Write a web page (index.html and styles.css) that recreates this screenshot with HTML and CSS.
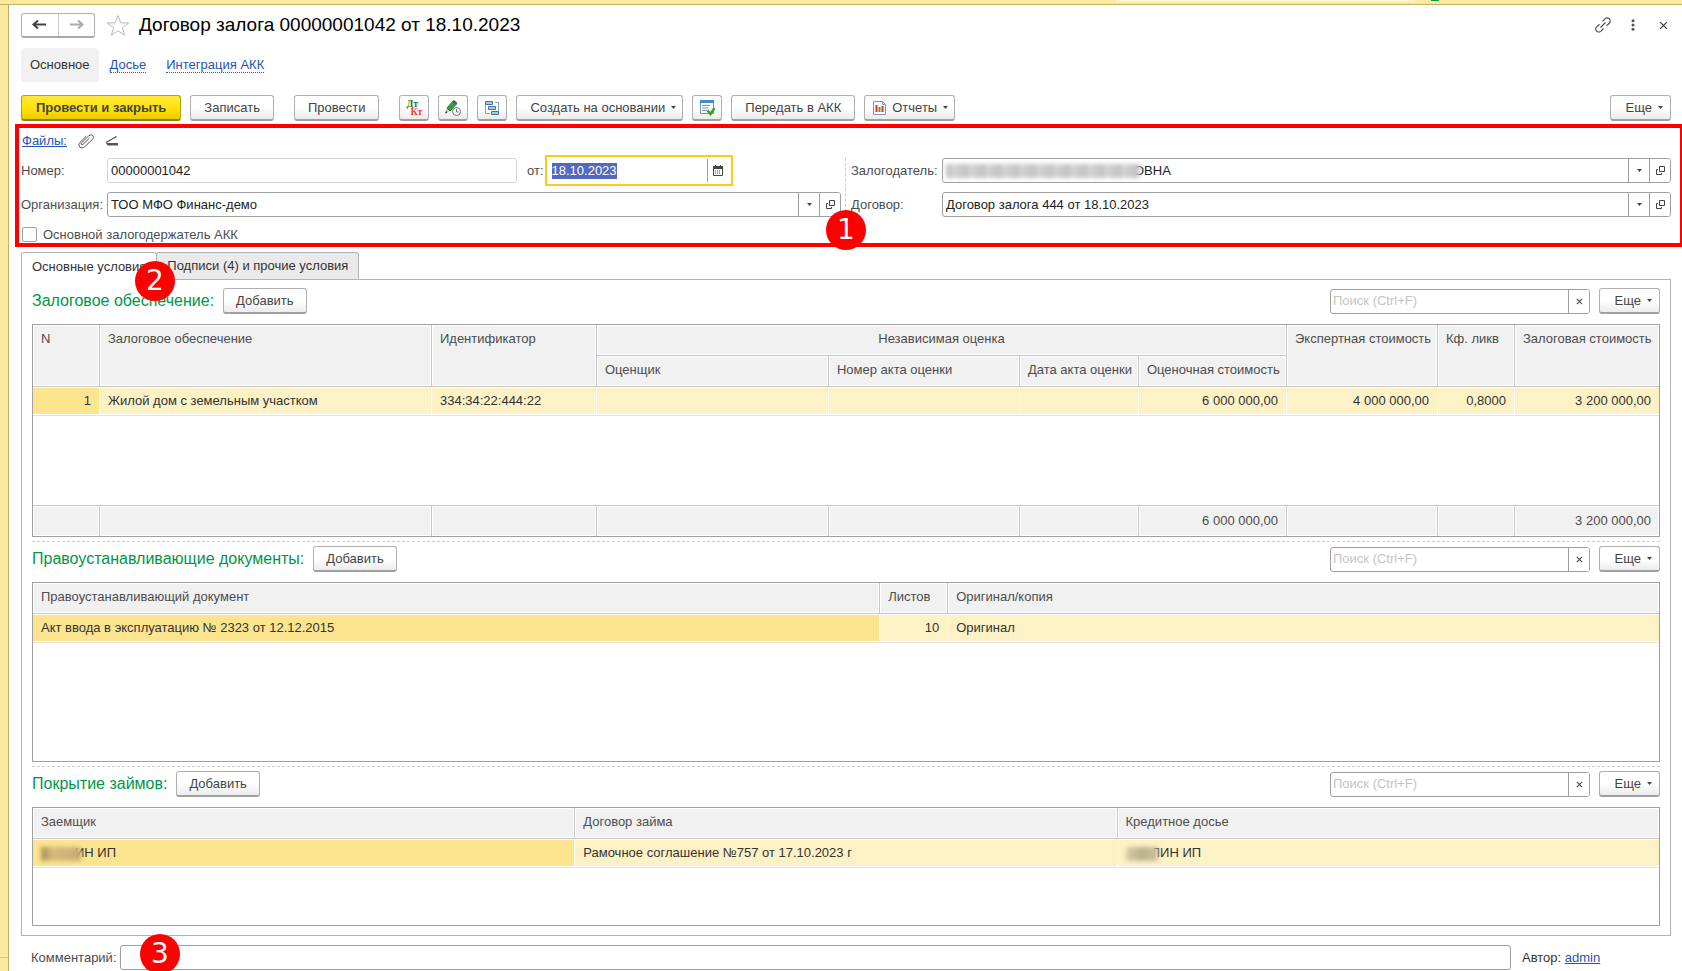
FILE: index.html
```html
<!DOCTYPE html>
<html lang="ru">
<head>
<meta charset="utf-8">
<title>Договор залога 00000001042 от 18.10.2023</title>
<link rel="stylesheet" href="styles.css">
</head>
<body>
<svg class="sprite" aria-hidden="true">
  <symbol id="open" viewBox="0 0 9 9"><path d="M3.500 .5h5v5h-5zM2 3.500H.5v5h5V7" fill="none" stroke="#444"/></symbol>
  <symbol id="caret" viewBox="0 0 5 3"><path d="M0 0h5L2.500 3z" fill="#444"/></symbol>
  <symbol id="cross" viewBox="0 0 8 8"><path d="M1 1l6 6M7 1L1 7" stroke="#444" stroke-width="1.200" fill="none"/></symbol>
</svg>
<div class="strip"><div class="strip-tab"></div><div class="strip-dot"></div></div>
<div class="frame">
<div class="rail"></div>
<main class="form">
  <header class="head">
    <div class="history">
      <button aria-label="Назад"><svg width="15" height="11" viewBox="0 0 15 11"><path d="M1.500 5.500H14M6 1.500l-4.500 4L6 9.500" fill="none" stroke="#444" stroke-width="2"/></svg></button>
      <button aria-label="Вперед"><svg width="15" height="11" viewBox="0 0 15 11"><path d="M1 5.500h12.500M9 1.500l4.500 4-4.500 4" fill="none" stroke="#aaa" stroke-width="2"/></svg></button>
    </div>
    <button class="bare star" aria-label="Избранное"><svg width="24" height="23" viewBox="0 0 24 23"><path d="M12 1.500l2.700 7.300 8 .2-6.300 4.700 2.300 7.500L12 16.800l-6.700 4.400 2.300-7.500L1.300 9l8-.2z" fill="#fff" stroke="#b4bac0"/></svg></button>
    <h1>Договор залога 00000001042 от 18.10.2023</h1>
    <div class="window-tools">
      <button class="bare" aria-label="Ссылка"><svg width="16" height="16" viewBox="0 0 16 16" fill="none" stroke="#555" stroke-width="1.200"><path d="M7.500 4.500l2.500-2.700a3 3 0 0 1 4.300 0 3 3 0 0 1 0 4.400L11.500 8.800M8.500 11.500L6 14.200a3 3 0 0 1-4.300 0 3 3 0 0 1 0-4.400L4.500 7.200M5.500 10.500l5-5"/></svg></button>
      <button class="bare" aria-label="Меню"><svg width="4" height="12" viewBox="0 0 4 12" fill="#555"><circle cx="2" cy="1.700" r="1.500"/><circle cx="2" cy="6" r="1.500"/><circle cx="2" cy="10.300" r="1.500"/></svg></button>
      <button class="bare close" aria-label="Закрыть"><svg width="9" height="9" viewBox="0 0 8 8"><use href="#cross"/></svg></button>
    </div>
  </header>

  <nav class="sections">
    <span class="current">Основное</span>
    <a href="#">Досье</a>
    <a href="#">Интеграция АКК</a>
  </nav>

  <div class="toolbar">
    <button class="btn primary">Провести и закрыть</button>
    <button class="btn">Записать</button>
    <button class="btn apart">Провести</button>
    <button class="btn icon apart" aria-label="Дт Кт"><span class="dtkt"><b class="dt">Дт</b><b class="kt">Кт</b></span></button>
    <button class="btn icon" aria-label="История"><svg width="18" height="18" viewBox="0 0 18 18"><path d="M1 14l2-5 3 3z" fill="#ddb68b"/><path d="M3 9l6-7 3.500 3L6 12z" fill="#3c9b42" stroke="#287a30"/><path d="M8.500 2.500L10 1l3.500 3L12 5.500z" fill="#555"/><path d="M1 14.500l1-2.500 1.500 1.500z" fill="#333"/><circle cx="12.500" cy="12.500" r="4" fill="#fff" stroke="#60788e"/><path d="M12.500 10v3h2" fill="none" stroke="#60788e"/></svg></button>
    <button class="btn icon" aria-label="Структура"><svg width="16" height="16" viewBox="0 0 16 16" fill="#a9cbe2" stroke="#42759a"><path d="M1.500 4v9.500H6M11 2.500h3.500V11" fill="none" stroke="#82a6bf"/><path d="M1.500 1.500h7v3h-7zM4.500 6.500h7v3h-7zM7.500 11.500h7v3h-7z"/></svg></button>
    <button class="btn menu wide">Создать на основании<svg width="5" height="3"><use href="#caret"/></svg></button>
    <button class="btn icon" aria-label="Задача"><svg width="17" height="17" viewBox="0 0 17 17"><path d="M1.500 1.500h13v13h-13z" fill="#fff" stroke="#6f95ba"/><path d="M1 1h14v3H1z" fill="#3f8bd0"/><path d="M3 6.500h8M3 9h6M3 11.500h5" stroke="#7996b1"/><path d="M8.500 11.500l3 3.500 4-6" fill="none" stroke="#32a52c" stroke-width="2.500"/></svg></button>
    <button class="btn">Передать в АКК</button>
    <button class="btn menu report"><svg width="13" height="14" viewBox="0 0 13 14"><path d="M.5.5h9l3 3v10H.5z" fill="#fff" stroke="#8298aa"/><path d="M9.500.5v3h3" fill="none" stroke="#8298aa"/><path d="M3.500 4v7" stroke="#e03028" stroke-width="2"/><path d="M6.500 6v5" stroke="#3d9e42" stroke-width="2"/><path d="M9.500 5v6" stroke="#e03028" stroke-width="2"/></svg>Отчеты<svg width="5" height="3"><use href="#caret"/></svg></button>
    <button class="btn menu more">Еще<svg width="5" height="3"><use href="#caret"/></svg></button>
  </div>

  <section class="details">
    <div class="files">
      <a href="#">Файлы:</a>
      <button class="bare" aria-label="Прикрепить"><svg width="18" height="16" viewBox="0 0 18 16"><path d="M12.500 5L6 11.300c-1.200 1-2.600-.3-1.500-1.500l7.300-7c2.800-2.500 6.300.8 3.700 3.500l-7.800 7.500c-3.400 3-8-1-4.700-4.500L9.500 3" fill="none" stroke="#555"/></svg></button>
      <button class="bare" aria-label="Сканировать"><svg width="13" height="12" viewBox="0 0 13 12"><path d="M11.500 1.500L1 7.500" stroke="#555" stroke-width="1.300"/><path d="M1 8h12v2.500H2.500z" fill="#555"/></svg></button>
    </div>
    <div class="columns">
      <div class="fields left">
        <label for="num">Номер:</label>
        <div class="row">
          <div class="field pale"><input id="num" value="00000001042"></div>
          <label for="date">от:</label>
          <div class="field date"><input id="date" value="18.10.2023"><button aria-label="Календарь"><svg width="10" height="11" viewBox="0 0 10 11"><path d="M.5 1.500h9v9h-9z" fill="#fff" stroke="#444"/><path d="M0 1h10v3H0zM2 0h1v2H2zM7 0h1v2H7z" fill="#444"/><path d="M2 6h6M2 8h6" stroke="#444" stroke-dasharray="1 1"/></svg></button></div>
        </div>
        <label for="org">Организация:</label>
        <div class="field"><input id="org" value="ТОО МФО Финанс-демо"><button aria-label="Выбрать"><svg width="5" height="3"><use href="#caret"/></svg></button><button aria-label="Открыть"><svg width="9" height="9"><use href="#open"/></svg></button></div>
      </div>
      <div class="fields right">
        <label for="owner">Залогодатель:</label>
        <div class="field"><span class="mask mask-owner"></span><input id="owner" class="after-mask" value="ОВНА"><button aria-label="Выбрать"><svg width="5" height="3"><use href="#caret"/></svg></button><button aria-label="Открыть"><svg width="9" height="9"><use href="#open"/></svg></button></div>
        <label for="deal">Договор:</label>
        <div class="field"><input id="deal" value="Договор залога 444 от 18.10.2023"><button aria-label="Выбрать"><svg width="5" height="3"><use href="#caret"/></svg></button><button aria-label="Открыть"><svg width="9" height="9"><use href="#open"/></svg></button></div>
      </div>
    </div>
    <label class="check"><input type="checkbox">Основной залогодержатель АКК</label>
    <span class="badge badge-1">1</span>
  </section>

  <div class="tabs" role="tablist">
    <button class="tab active" role="tab">Основные условия</button>
    <button class="tab" role="tab">Подписи (4) и прочие условия</button>
    <span class="badge badge-2">2</span>
  </div>

  <div class="panel">
    <section class="block">
      <div class="block-head">
        <h2>Залоговое обеспечение:</h2><button class="btn">Добавить</button>
        <div class="field search"><input aria-label="Поиск" placeholder="Поиск (Ctrl+F)"><button aria-label="Очистить"><svg width="7" height="7"><use href="#cross"/></svg></button></div>
        <button class="btn menu more">Еще<svg width="5" height="3"><use href="#caret"/></svg></button>
      </div>
      <table class="collateral">
        <colgroup><col class="c-n"><col class="c-name"><col class="c-id"><col class="c-by"><col class="c-act"><col class="c-date"><col class="c-sum"><col class="c-exp"><col class="c-k"><col class="c-total"></colgroup>
        <thead>
          <tr><th rowspan="2">N</th><th rowspan="2">Залоговое обеспечение</th><th rowspan="2">Идентификатор</th><th colspan="4" class="center">Независимая оценка</th><th rowspan="2">Экспертная стоимость</th><th rowspan="2">Кф. ликв</th><th rowspan="2">Залоговая стоимость</th></tr>
          <tr><th>Оценщик</th><th>Номер акта оценки</th><th>Дата акта оценки</th><th>Оценочная стоимость</th></tr>
        </thead>
        <tbody>
          <tr><td class="num selected">1</td><td>Жилой дом с земельным участком</td><td>334:34:22:444:22</td><td></td><td></td><td></td><td class="num">6 000 000,00</td><td class="num">4 000 000,00</td><td class="num">0,8000</td><td class="num">3 200 000,00</td></tr>
          <tr class="rest"><td colspan="10"></td></tr>
        </tbody>
        <tfoot>
          <tr><td></td><td></td><td></td><td></td><td></td><td></td><td class="num">6 000 000,00</td><td></td><td></td><td class="num">3 200 000,00</td></tr>
        </tfoot>
      </table>
    </section>

    <section class="block">
      <div class="block-head">
        <h2>Правоустанавливающие документы:</h2><button class="btn">Добавить</button>
        <div class="field search"><input aria-label="Поиск" placeholder="Поиск (Ctrl+F)"><button aria-label="Очистить"><svg width="7" height="7"><use href="#cross"/></svg></button></div>
        <button class="btn menu more">Еще<svg width="5" height="3"><use href="#caret"/></svg></button>
      </div>
      <table class="papers">
        <colgroup><col class="c-doc"><col class="c-pages"><col></colgroup>
        <thead><tr><th>Правоустанавливающий документ</th><th>Листов</th><th>Оригинал/копия</th></tr></thead>
        <tbody>
          <tr><td class="selected">Акт ввода в эксплуатацию № 2323 от 12.12.2015</td><td class="num">10</td><td>Оригинал</td></tr>
          <tr class="rest"><td colspan="3"></td></tr>
        </tbody>
      </table>
    </section>

    <section class="block">
      <div class="block-head">
        <h2>Покрытие займов:</h2><button class="btn">Добавить</button>
        <div class="field search"><input aria-label="Поиск" placeholder="Поиск (Ctrl+F)"><button aria-label="Очистить"><svg width="7" height="7"><use href="#cross"/></svg></button></div>
        <button class="btn menu more">Еще<svg width="5" height="3"><use href="#caret"/></svg></button>
      </div>
      <table class="loans">
        <colgroup><col class="c-third"><col class="c-third"><col></colgroup>
        <thead><tr><th>Заемщик</th><th>Договор займа</th><th>Кредитное досье</th></tr></thead>
        <tbody>
          <tr><td class="selected"><span class="mask mask-name"></span>ИН ИП</td><td>Рамочное соглашение №757 от 17.10.2023 г</td><td><span class="mask mask-file"></span>ЛИН ИП</td></tr>
          <tr class="rest"><td colspan="3"></td></tr>
        </tbody>
      </table>
    </section>
  </div>

  <footer class="bottom">
    <label for="note">Комментарий:</label>
    <div class="field"><input id="note"></div>
    <span class="author">Автор: <a href="#">admin</a></span>
    <span class="badge badge-3">3</span>
  </footer>
</main>
</div>
</body>
</html>
```
FILE: styles.css
```css
* { box-sizing: border-box; }
html { overflow: hidden; }
body {
  margin: 0;
  min-height: 100vh;
  display: flex;
  flex-direction: column;
  font: 13px/16px "Liberation Sans", Arial, sans-serif;
  color: #4d4d4d;
  background: #fff;
}
button, input { font: inherit; color: inherit; margin: 0; }
button { padding: 0; cursor: pointer; }
svg { display: block; flex: none; }
a { color: #1f55b8; }
.sprite { position: absolute; width: 0; height: 0; }

.strip { height: 5px; background: #fbea9e; border-bottom: 1px solid #c0b068; display: flex; justify-content: flex-end; }
.strip-tab { width: 299px; height: 2px; background: #fdf6cf; margin-right: 16px; }
.strip-dot { width: 8px; height: 1px; background: #0a9a4a; margin-right: 243px; }
.frame { flex: 1; display: flex; }
.rail { width: 9px; display: flex; align-items: flex-end; background: #fbea9e; border-right: 1px solid #c0b068; }
.rail::after { content: ""; flex: 1; height: 13px; border-top: 1px solid #d6c67c; }
.form { flex: 1; min-width: 0; padding: 8px 11px 0 12px; overflow: clip; }

.head { display: flex; align-items: center; height: 24px; }
.history { display: flex; width: 74px; height: 25px; border: 1px solid #b0b0b0; border-bottom: 2px solid #a8a8a8; border-radius: 3px; }
.history button { flex: 1; display: flex; align-items: center; justify-content: center; border: 0; background: none; }
.history button + button { border-left: 1px solid #c8c8c8; }
.bare { border: 0; background: none; display: flex; align-items: center; justify-content: center; }
.star { margin: 0 9px 0 11px; }
h1 { margin: 0; font-size: 19px; line-height: 24px; font-weight: 400; color: #000; }
.window-tools { margin-left: auto; display: flex; align-items: center; gap: 20px; padding-right: 3px; }
.close { margin-left: 4px; }

.sections { display: flex; align-items: center; gap: 20px; margin-top: 11px; height: 34px; }
.sections .current { padding: 9px 9px; background: #f1f1f1; border-radius: 4px; color: #333; margin-right: -9px; }
.sections a { text-decoration: none; border-bottom: 1px dotted #1f55b8; line-height: 14px; }

.toolbar { display: flex; gap: 9px; margin-top: 13px; }
.btn {
  height: 26px;
  padding: 0 12px;
  border: 1px solid #b0b0b0;
  border-bottom: 2px solid #a0a0a0;
  border-radius: 3px;
  background: linear-gradient(#fff 50%, #ececec);
  color: #444;
  white-space: nowrap;
}
.toolbar .btn { padding: 0 13px; }
.toolbar .primary { padding: 0 14px; font-weight: 700; background: linear-gradient(#ffe93c, #ffe100 60%, #eccb00); border-color: #b8a100 #b8a100 #8f7d00; }
.apart { margin-left: 11px; }
.toolbar .icon { width: 30px; padding: 0; display: flex; align-items: center; justify-content: center; }
.menu { display: flex; align-items: center; gap: 6px; }
.toolbar .wide { padding: 0 6px 0 13px; }
.toolbar .report { padding: 0 6px 0 8px; }
.more, .toolbar .more { width: 61px; justify-content: flex-end; padding: 0 7px; }
.toolbar .more { margin-left: auto; }
.dtkt { display: flex; flex-direction: column; font: 700 10px/8px "Liberation Serif", serif; }
.dt { color: #1d7a1d; text-align: left; }
.kt { color: #f03c3c; padding-left: 4px; }

.details { position: relative; padding: 12px 0 4px; }
.details::after { content: ""; position: absolute; inset: 3px -13px 0 -6px; border: 4px solid #f00; pointer-events: none; }
.files { display: flex; align-items: center; gap: 10px; height: 16px; padding-left: 1px; }
.columns { display: grid; grid-template-columns: 820fr 820fr; gap: 10px; margin-top: 9px; }
.fields { display: grid; grid-template-columns: 86px minmax(0, 1fr); row-gap: 9px; align-items: center; }
.fields.right { grid-template-columns: 91px minmax(0, 1fr); position: relative; }
.fields.right::before { content: ""; position: absolute; left: -6px; top: 0; bottom: 0; border-left: 1px dashed #ccc; }
.row { display: flex; align-items: center; gap: 10px; height: 25px; }
.row .field:first-child { flex: 0 1 410px; }
.row label { margin-right: -9px; }
.field { display: flex; align-items: stretch; min-width: 0; height: 25px; border: 1px solid #a0a0a0; border-radius: 3px; background: #fff; overflow: hidden; }
.field input { flex: 1; min-width: 0; width: 0; border: 0; outline: 0; padding: 0 3px; background: none; color: #222; }
.field button { width: 21px; border: 0; border-left: 1px solid #a0a0a0; background: #fff; display: flex; align-items: center; justify-content: center; }
.field.pale { border-color: #d4d4d4; }
.field.date { width: 188px; height: 31px; padding: 2px; border: 2px solid #fccb1b; border-radius: 0; justify-content: space-between; align-items: center; }
.field.date input { flex: none; width: 65px; height: 16px; margin-left: 3px; padding: 0; background: #5369c0; color: #fff; }
.field.date button { width: 22px; height: 23px; }
.check { display: flex; align-items: center; gap: 6px; margin-top: 9px; height: 17px; width: max-content; padding-left: 1px; }
.check input { appearance: none; width: 15px; height: 15px; border: 1px solid #a0a0a0; border-radius: 2px; background: #fff; }

.mask { flex: none; display: inline-block; height: 14px; vertical-align: middle; filter: blur(2px); background: repeating-linear-gradient(90deg, #c6c4c6 0 5px, #d6d6d6 7px 9px, #cbc9cb 12px 17px); }
.mask-owner { width: 194px; align-self: center; margin-left: 3px; z-index: 1; }
.field .after-mask { padding-left: 0; margin-left: -6px; }
.mask-name { width: 40px; margin-right: -6px; background: linear-gradient(90deg, #a88d5c, #d3bc7c 30%, #c5ae74); }
.mask-file { width: 32px; margin-right: -6px; background: linear-gradient(90deg, #dccda4, #b9b08f 50%, #cfc59f); }

.badge { position: absolute; z-index: 2; width: 40px; height: 40px; border-radius: 50%; background: #f00; color: #fff; font: 28px/40px "DejaVu Sans", sans-serif; text-align: center; }
.badge-1 { left: 805px; bottom: -3px; }
.badge-2 { left: 114px; top: 9px; }
.badge-3 { left: 119px; top: -11px; }

.tabs { position: relative; display: flex; margin-top: 5px; }
.tab { height: 27px; padding: 0 10px; border: 1px solid #b3b3b3; border-bottom: 0; border-radius: 3px 3px 0 0; background: #eaeaea; color: #333; }
.tab.active { height: 28px; margin-bottom: -1px; background: #fff; z-index: 1; }
.tab + .tab { margin-left: -1px; }
.panel { border: 1px solid #b3b3b3; padding: 8px 10px 9px; }
.block + .block { margin-top: 4px; padding-top: 4px; border-top: 1px dashed #ccc; }
.block-head { display: flex; align-items: center; gap: 9px; margin-bottom: 10px; }
h2 { margin: 0; font-size: 16px; line-height: 20px; font-weight: 400; color: #009646; white-space: nowrap; }
.search { width: 260px; margin-left: auto; }
.search input { padding: 0 2px; }
.search input::placeholder { color: #c4c4c4; opacity: 1; }

table { width: 100%; table-layout: fixed; border: 1px solid #a0a0a0; border-collapse: separate; border-spacing: 0; }
th, td { padding: 0 8px; white-space: nowrap; overflow: hidden; text-align: left; font-weight: 400; }
th { height: 31px; padding-top: 6px; vertical-align: top; color: #4d4d4d; background: #f1f1f1; border-right: 1px solid #c6c6c6; border-bottom: 1px solid #c6c6c6; box-shadow: inset 0 0 0 1px #fff; }
tbody td { height: 29px; background: #fdf1c6; color: #333; border-right: 1px solid #fff; border-bottom: 1px solid #e2e2e2; box-shadow: inset 0 1px #fff, inset 0 -1px #fff; }
tbody td.selected { background: #fde48f; }
tfoot td { height: 31px; background: #f1f1f1; border-right: 1px solid #c6c6c6; border-top: 1px solid #c6c6c6; box-shadow: inset 0 0 0 1px #fff; }
th:last-child, td:last-child { border-right: 0; }
thead tr + tr th:last-child { border-right: 1px solid #c6c6c6; }
.num { text-align: right; }
.center { text-align: center; }
tbody .rest td { background: #fff; border: 0; box-shadow: none; padding: 0; }
.collateral .rest td { height: 89px; }
.papers .rest td { height: 118px; }
.loans .rest td { height: 57px; }
.c-n { width: 67px; }
.c-id { width: 165px; }
.c-by { width: 232px; }
.c-act { width: 191px; }
.c-date { width: 119px; }
.c-sum { width: 148px; }
.c-exp { width: 151px; }
.c-k { width: 77px; }
.c-total { width: 144px; }
.c-doc { width: 52.1%; }
.c-pages { width: 68px; }
.c-third { width: 33.35%; }

.bottom { position: relative; display: flex; align-items: center; margin-top: 9px; padding-left: 10px; }
.bottom .field { flex: 1; margin-left: 3px; }
.author { width: 149px; margin-left: 11px; color: #333; }
```
